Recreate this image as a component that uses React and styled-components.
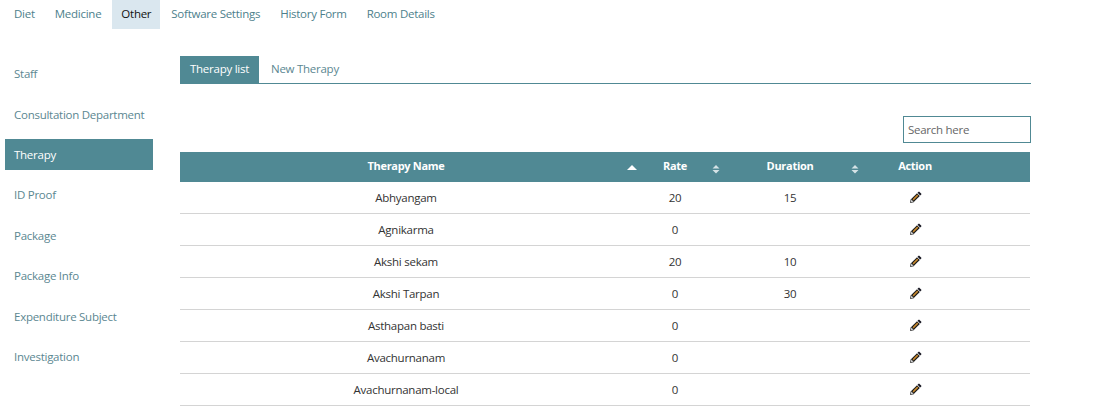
import React from 'react'
import styled, { createGlobalStyle } from 'styled-components'

const teal = '#508994'

const GlobalStyle = createGlobalStyle`
  html, body {
    margin: 0;
    padding: 0;
    height: 100%;
    overflow: hidden;
    background: #fff;
    font-family: "Open Sans", "Noto Sans", sans-serif;
    font-size: 11.5px;
    letter-spacing: -0.26px;
  }
`

const Page = styled.div`
  width: 1104px;
  height: 412px;
  padding-left: 5px;
  box-sizing: border-box;
`

const TopNav = styled.nav`
  display: flex;
  height: 29px;
  gap: 2px;
`

const TopLink = styled.a`
  display: flex;
  align-items: center;
  padding: 0 9px 2px;
  color: ${p => (p.$active ? '#111' : '#4d7f8c')};
  background: ${p => (p.$active ? '#dae7ef' : 'transparent')};
`

const Body = styled.div`
  display: flex;
  padding-top: 27px;
`

const SideNav = styled.aside`
  width: 148px;
  margin-right: 27px;
  display: flex;
  flex-direction: column;
  gap: 9.4px;
  padding-top: 2.3px;
`

const SideLink = styled.a`
  display: flex;
  align-items: center;
  height: 31px;
  padding-left: 9px;
  color: ${p => (p.$active ? '#fff' : '#5b8791')};
  background: ${p => (p.$active ? teal : 'transparent')};
`

const Content = styled.main`
  width: 851px;
`

const Tabs = styled.div`
  display: flex;
  height: 27px;
  border-bottom: 1px solid ${teal};
`

const Tab = styled.a`
  display: flex;
  align-items: center;
  padding: 0 10px 2px;
  margin-right: 2px;
  color: ${p => (p.$active ? '#fff' : '#5b8791')};
  background: ${p => (p.$active ? teal : 'transparent')};
`

const SearchRow = styled.div`
  display: flex;
  justify-content: flex-end;
  padding: 32px 0 9px;
`

const SearchInput = styled.input`
  width: 128px;
  height: 27px;
  box-sizing: border-box;
  padding: 0 4px;
  border: 1px solid ${teal};
  outline: none;
  font: inherit;
  letter-spacing: inherit;
  color: #333;
  &::placeholder {
    color: #666;
    opacity: 1;
  }
`

const Table = styled.table`
  width: 850px;
  table-layout: fixed;
  border-collapse: collapse;
`

const Head = styled.th`
  position: relative;
  height: 30px;
  padding: 0 0 3px;
  box-sizing: border-box;
  width: ${p => p.$w}px;
  background: ${teal};
  color: #fff;
  font-size: 11px;
  font-weight: 700;
  letter-spacing: -0.3px;
  text-align: center;
`

const Cell = styled.td`
  height: 31px;
  padding: 0;
  text-align: center;
  color: #333;
  border-bottom: 1px solid #d4d4d4;
`

const SortMark = styled.svg`
  position: absolute;
  z-index: 1;
  top: 11px;
  right: ${p => p.$right}px;
  width: 10px;
  height: 11px;
  fill: ${p => (p.$asc ? '#fff' : '#d5e3e6')};
`

const EditIcon = styled.svg`
  display: block;
  width: 12px;
  height: 12px;
  margin: -1px auto 0;
  transform: translateX(1px);
`

const topItems = ['Diet', 'Medicine', 'Other', 'Software Settings', 'History Form', 'Room Details']
const sideItems = ['Staff', 'Consultation Department', 'Therapy', 'ID Proof', 'Package', 'Package Info', 'Expenditure Subject', 'Investigation']
const therapies = [
  ['Abhyangam', 20, 15],
  ['Agnikarma', 0, ''],
  ['Akshi sekam', 20, 10],
  ['Akshi Tarpan', 0, 30],
  ['Asthapan basti', 0, ''],
  ['Avachurnanam', 0, ''],
  ['Avachurnanam-local', 0, ''],
]

function Sort({ right, asc }) {
  return (
    <SortMark $right={right} $asc={asc} viewBox="0 0 10 11">
      <path d={asc ? 'M5 2 10 7H0Z' : 'M5 2 8.5 5.5H1.5Z M1.5 7h7L5 10.5Z'} />
    </SortMark>
  )
}

function Pencil() {
  return (
    <EditIcon viewBox="0 0 12 12">
      <path d="M9 .4 11.6 3 10.2 4.5 7.5 1.8Z" fill="#14141f" />
      <path d="M7 2.2 9.8 5 4 10.8 1.2 8Z" fill="#1a1a1a" />
      <path d="M7.2 3.6 8.3 4.7 3.6 9.4 2.6 8.2Z" fill="#c98a2e" />
      <path d="M1.2 8.1 3.9 10.8.3 11.7Z" fill="#f0f0f0" stroke="#111" strokeWidth=".7" />
    </EditIcon>
  )
}

export default function App() {
  return (
    <Page>
      <GlobalStyle />
      <TopNav>
        {topItems.map(item => (
          <TopLink key={item} $active={item === 'Other'}>{item}</TopLink>
        ))}
      </TopNav>
      <Body>
        <SideNav>
          {sideItems.map(item => (
            <SideLink key={item} $active={item === 'Therapy'}>{item}</SideLink>
          ))}
        </SideNav>
        <Content>
          <Tabs>
            <Tab $active>Therapy list</Tab>
            <Tab>New Therapy</Tab>
          </Tabs>
          <SearchRow>
            <SearchInput placeholder="Search here" />
          </SearchRow>
          <Table>
            <thead>
              <tr>
                <Head $w={452}>Therapy Name<Sort right={-5} asc /></Head>
                <Head $w={86}>Rate<Sort right={-3} /></Head>
                <Head $w={144}>Duration<Sort right={2} /></Head>
                <Head $w={106}>Action</Head>
                <Head $w={62} />
              </tr>
            </thead>
            <tbody>
              {therapies.map(([name, rate, duration]) => (
                <tr key={name}>
                  <Cell>{name}</Cell>
                  <Cell>{rate}</Cell>
                  <Cell>{duration}</Cell>
                  <Cell><Pencil /></Cell>
                  <Cell />
                </tr>
              ))}
            </tbody>
          </Table>
        </Content>
      </Body>
    </Page>
  )
}
